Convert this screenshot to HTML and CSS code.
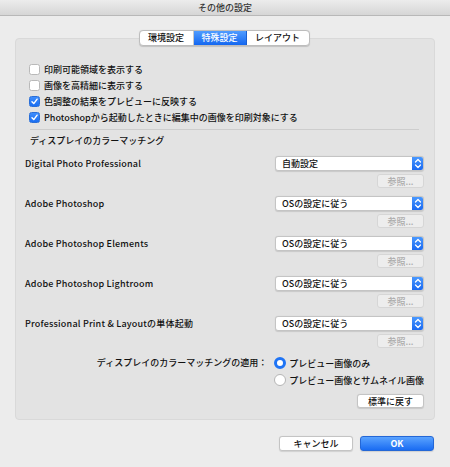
FILE: index.html
```html
<!DOCTYPE html>
<html lang="ja">
<head>
<meta charset="utf-8">
<title>その他の設定</title>
<link rel="stylesheet" href="styles.css">
</head>
<body>
<div class="window">
  <div class="titlebar">その他の設定</div>
  <div class="panel">
    <div class="tabs">
      <span class="tab">環境設定</span>
      <span class="tab active">特殊設定</span>
      <span class="tab last">レイアウト</span>
    </div>
    <div class="checks">
      <label class="check"><span class="box"></span>印刷可能領域を表示する</label>
      <label class="check"><span class="box"></span>画像を高精細に表示する</label>
      <label class="check"><span class="box on"><svg viewBox="0 0 10 10" width="9" height="9"><path d="M2.2 5.2 L4.2 7.3 L7.9 2.4" fill="none" stroke="#fff" stroke-width="1.6" stroke-linecap="round" stroke-linejoin="round"/></svg></span>色調整の結果をプレビューに反映する</label>
      <label class="check"><span class="box on"><svg viewBox="0 0 10 10" width="9" height="9"><path d="M2.2 5.2 L4.2 7.3 L7.9 2.4" fill="none" stroke="#fff" stroke-width="1.6" stroke-linecap="round" stroke-linejoin="round"/></svg></span>Photoshopから起動したときに編集中の画像を印刷対象にする</label>
    </div>
    <div class="sep"></div>
    <div class="heading">ディスプレイのカラーマッチング</div>

    <div class="row">
      <span class="label">Digital Photo Professional</span>
      <span class="select"><span class="val">自動設定</span><span class="arrows"><svg viewBox="0 0 12 15" width="12" height="15"><path d="M3.5 6 L6 3.5 L8.5 6 M3.5 9 L6 11.5 L8.5 9" fill="none" stroke="#fff" stroke-width="1.3" stroke-linecap="round" stroke-linejoin="round"/></svg></span></span>
    </div>
    <div class="browse-row"><span class="btn disabled">参照...</span></div>

    <div class="row">
      <span class="label">Adobe Photoshop</span>
      <span class="select"><span class="val">OSの設定に従う</span><span class="arrows"><svg viewBox="0 0 12 15" width="12" height="15"><path d="M3.5 6 L6 3.5 L8.5 6 M3.5 9 L6 11.5 L8.5 9" fill="none" stroke="#fff" stroke-width="1.3" stroke-linecap="round" stroke-linejoin="round"/></svg></span></span>
    </div>
    <div class="browse-row"><span class="btn disabled">参照...</span></div>

    <div class="row">
      <span class="label">Adobe Photoshop Elements</span>
      <span class="select"><span class="val">OSの設定に従う</span><span class="arrows"><svg viewBox="0 0 12 15" width="12" height="15"><path d="M3.5 6 L6 3.5 L8.5 6 M3.5 9 L6 11.5 L8.5 9" fill="none" stroke="#fff" stroke-width="1.3" stroke-linecap="round" stroke-linejoin="round"/></svg></span></span>
    </div>
    <div class="browse-row"><span class="btn disabled">参照...</span></div>

    <div class="row">
      <span class="label">Adobe Photoshop Lightroom</span>
      <span class="select"><span class="val">OSの設定に従う</span><span class="arrows"><svg viewBox="0 0 12 15" width="12" height="15"><path d="M3.5 6 L6 3.5 L8.5 6 M3.5 9 L6 11.5 L8.5 9" fill="none" stroke="#fff" stroke-width="1.3" stroke-linecap="round" stroke-linejoin="round"/></svg></span></span>
    </div>
    <div class="browse-row"><span class="btn disabled">参照...</span></div>

    <div class="row">
      <span class="label">Professional Print &amp; Layoutの単体起動</span>
      <span class="select"><span class="val">OSの設定に従う</span><span class="arrows"><svg viewBox="0 0 12 15" width="12" height="15"><path d="M3.5 6 L6 3.5 L8.5 6 M3.5 9 L6 11.5 L8.5 9" fill="none" stroke="#fff" stroke-width="1.3" stroke-linecap="round" stroke-linejoin="round"/></svg></span></span>
    </div>
    <div class="browse-row"><span class="btn disabled">参照...</span></div>

    <div class="radios">
      <span class="rlabel">ディスプレイのカラーマッチングの適用：</span>
      <label class="radio"><span class="dot on"></span>プレビュー画像のみ</label>
      <span></span>
      <label class="radio"><span class="dot"></span>プレビュー画像とサムネイル画像</label>
    </div>
    <div class="reset-row"><span class="btn reset">標準に戻す</span></div>
  </div>
  <div class="footer">
    <span class="btn big">キャンセル</span>
    <span class="btn big primary">OK</span>
  </div>
</div>
</body>
</html>
```
FILE: styles.css
```css
* { box-sizing: border-box; }
html, body { margin: 0; padding: 0; }
body {
  width: 450px;
  height: 467px;
  background: #ececec;
  font-family: "Noto Sans CJK JP", "Noto Sans", sans-serif;
  font-size: 9px;
  font-weight: 500;
  color: #111;
  overflow: hidden;
}
.window {
  width: 450px;
  height: 467px;
  background: #ececec;
}
.titlebar {
  height: 16px;
  line-height: 15px;
  text-align: center;
  color: #333;
  background: linear-gradient(#ececec, #d6d6d6);
  border-bottom: 1px solid #b8b8b8;
}
.panel {
  margin: 22px 15px 0;
  height: 382px;
  background: #e3e3e3;
  border: 1px solid #d9d9d9;
  border-radius: 4px;
  padding: 0 10px 0 8px;
}
.tabs {
  display: flex;
  width: 171px;
  height: 16px;
  margin: -9px auto 0;
  background: #fff;
  border: 1px solid #bdbdbd;
  border-radius: 4px;
  box-shadow: 0 0.5px 1px rgba(0,0,0,0.15);
  overflow: hidden;
}
.tab {
  flex: 0 0 auto;
  width: 54px;
  line-height: 14px;
  text-align: center;
  border-right: 1px solid #c8c8c8;
  color: #111;
}
.tab.active {
  width: 53px;
  background: linear-gradient(#4f9cff, #1467f0);
  color: #fff;
  border-right-color: #1a5fd0;
}
.tab.last { flex: 1; border-right: 0; }
.checks {
  margin-top: 15px;
  padding-left: 5px;
}
.check {
  display: flex;
  align-items: center;
  height: 16px;
  gap: 4px;
}
.box {
  width: 11px;
  height: 11px;
  background: #fff;
  border: 1px solid #b9b9b9;
  border-radius: 2.5px;
  display: flex;
  align-items: center;
  justify-content: center;
}
.box.on {
  background: linear-gradient(#3e8dfc, #1a6ef2);
  border-color: #2a6fd8;
}
.sep {
  height: 1px;
  background: #cdcdcd;
  margin: 4px 5px 0 6px;
}
.heading {
  margin-top: 4px;
  padding-left: 6px;
  line-height: 14px;
}
.row {
  display: flex;
  justify-content: space-between;
  align-items: center;
  height: 15px;
  margin-top: 8px;
}
.label { padding-left: 1px; letter-spacing: 0.2px; }
.select {
  width: 149px;
  height: 15px;
  display: flex;
  background: #fff;
  border: 1px solid #c4c4c4;
  border-radius: 3px;
  box-shadow: 0 0.5px 1px rgba(0,0,0,0.12);
  overflow: hidden;
}
.val {
  flex: 1;
  padding-left: 6px;
  line-height: 13px;
}
.arrows {
  width: 12px;
  margin: -1px -1px -1px 0;
  background: linear-gradient(#4c9bff, #1766f0);
  display: flex;
  align-items: center;
  justify-content: center;
}
.browse-row, .reset-row {
  display: flex;
  justify-content: flex-end;
  margin-top: 3px;
}
.btn {
  display: inline-flex;
  align-items: center;
  justify-content: center;
  height: 14px;
  background: #fff;
  border: 1px solid #c4c4c4;
  border-radius: 3px;
  box-shadow: 0 0.5px 1px rgba(0,0,0,0.12);
}
.btn.disabled {
  width: 47px;
  background: #ededed;
  border-color: #d6d6d6;
  color: #ababab;
  box-shadow: none;
}
.radios {
  display: grid;
  grid-template-columns: 1fr auto;
  column-gap: 7px;
  margin-top: 7px;
}
.rlabel {
  text-align: right;
  line-height: 16px;
}
.radio {
  display: flex;
  align-items: center;
  height: 18px;
  gap: 3px;
}
.radios .radio:first-of-type { height: 16px; }
.dot {
  width: 12px;
  height: 12px;
  border-radius: 50%;
  background: #fff;
  border: 1px solid #b5b5b5;
}
.dot.on {
  border: 3.5px solid #1f74f5;
  background: #fff;
}
.reset-row { margin-top: 5px; }
.btn.reset { width: 67px; }
.footer {
  display: flex;
  justify-content: flex-end;
  gap: 7px;
  margin: 16px 16px 0 0;
}
.btn.big {
  width: 74px;
  height: 15px;
}
.btn.primary {
  background: linear-gradient(#5aa3ff, #1a6cf2);
  border-color: #2467d6;
  color: #fff;
  font-weight: bold;
}
```
